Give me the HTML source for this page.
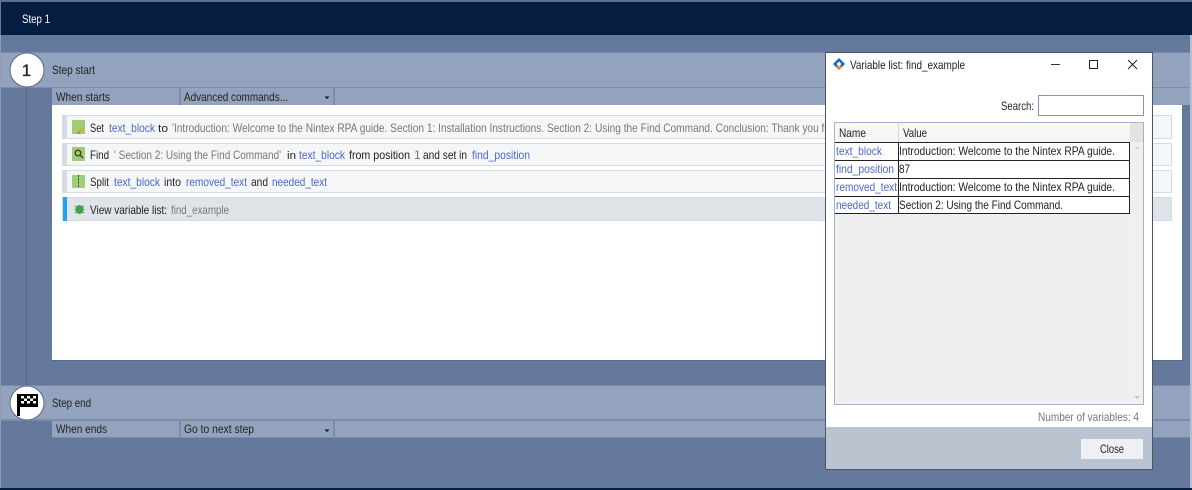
<!DOCTYPE html>
<html>
<head>
<meta charset="utf-8">
<style>
html,body{margin:0;padding:0;background:#64789c;width:1192px;height:490px;overflow:hidden}
svg{display:block}
text{font-family:"Liberation Sans",sans-serif;font-size:12px;fill:#222}
.w{fill:#fff}
.g{fill:#777}
.b{fill:#4c66cc}
</style>
</head>
<body>
<svg width="1192" height="490" viewBox="0 0 1192 490" xmlns="http://www.w3.org/2000/svg">
<defs>
<clipPath id="rowclip"><rect x="62" y="110" width="764" height="40"/></clipPath>
</defs>
<rect width="1192" height="490" fill="#64789c"/>
<rect x="0" y="0" width="1192" height="2" fill="#5d7091"/>
<rect x="1" y="2" width="1191" height="33" fill="#041d40"/>
<text class="w" x="22" y="23" textLength="28" lengthAdjust="spacingAndGlyphs">Step 1</text>

<!-- step start -->
<rect x="0" y="52" width="1192" height="36" fill="#93a2bd"/>
<rect x="0" y="52" width="1192" height="1" fill="#7a8bab"/>
<rect x="0" y="87" width="1192" height="1" fill="#7a8bab"/>
<rect x="26" y="87" width="1" height="299" fill="#55678a"/>
<circle cx="27" cy="70" r="17" fill="#fff" stroke="#55678a" stroke-width="1"/>
<text x="26.500" y="76" text-anchor="middle" style="font-size:17px;stroke:#111;stroke-width:0.300">1</text>
<text x="52" y="74" textLength="43" lengthAdjust="spacingAndGlyphs">Step start</text>
<rect x="52" y="88" width="1138" height="17" fill="#93a2bd"/>
<rect x="179" y="88" width="2" height="17" fill="#7a8bab"/>
<rect x="333" y="88" width="2" height="17" fill="#7a8bab"/>
<text x="56" y="101" textLength="54" lengthAdjust="spacingAndGlyphs">When starts</text>
<text x="184" y="101" textLength="104" lengthAdjust="spacingAndGlyphs">Advanced commands...</text>
<path d="M324.500 96.500h5l-2.500 2.500z" fill="#111"/>

<!-- panel -->
<rect x="52" y="105" width="1130" height="255" fill="#fff"/>
<rect x="52" y="360" width="1130" height="1" fill="#55678a"/>

<!-- rows -->
<rect x="62.500" y="115.500" width="1109" height="23" fill="#f5f6f8" stroke="#d5dae3"/>
<rect x="62" y="115" width="5" height="24" fill="#d5dae3"/>
<rect x="62.500" y="143.500" width="1109" height="22" fill="#f5f6f8" stroke="#d5dae3"/>
<rect x="62" y="143" width="5" height="23" fill="#d5dae3"/>
<rect x="62.500" y="170.500" width="1109" height="22" fill="#f5f6f8" stroke="#d5dae3"/>
<rect x="62" y="170" width="5" height="23" fill="#d5dae3"/>
<rect x="62.500" y="197.500" width="1109" height="23" fill="#dfe3ea" stroke="#d5dae3"/>
<rect x="63" y="197" width="4" height="24" fill="#1ca5ee"/>

<!-- icon: set -->
<rect x="72" y="120" width="13" height="14" fill="#a3cc78"/>
<path d="M79 132l5-5" stroke="#e8a020" stroke-width="1.600"/>
<path d="M78 133.500l1.500-1.500" stroke="#e0407a" stroke-width="1.600"/>
<!-- icon: find -->
<rect x="72" y="147" width="13" height="14" fill="#a3cc78"/>
<circle cx="78" cy="153" r="2.800" fill="none" stroke="#33472a" stroke-width="1.300"/>
<path d="M80 155l3 3" stroke="#33472a" stroke-width="1.500"/>
<!-- icon: split -->
<rect x="72" y="175" width="13" height="13" fill="#a3cc78"/>
<path d="M78.500 175v13" stroke="#33472a" stroke-width="1" stroke-dasharray="2 1.300"/>
<!-- icon: bug -->
<ellipse cx="79.500" cy="209.500" rx="3.800" ry="4.500" fill="#45a04a"/>
<path d="M75 206l2 1.500M84 206l-2 1.500M74.500 209.500h2M84.500 209.500h-2M75 213l2-1.500M84 213l-2-1.500" stroke="#45a04a" stroke-width="1.200"/>

<!-- row 1 text -->
<text x="90" y="132" textLength="14" lengthAdjust="spacingAndGlyphs">Set</text>
<text class="b" x="109" y="132" textLength="46" lengthAdjust="spacingAndGlyphs">text_block</text>
<text x="158" y="132" textLength="10" lengthAdjust="spacingAndGlyphs" style="font-size:11px">to</text>
<g clip-path="url(#rowclip)"><text class="g" x="172" y="132" textLength="658" lengthAdjust="spacingAndGlyphs">'Introduction: Welcome to the Nintex RPA guide. Section 1: Installation Instructions. Section 2: Using the Find Command. Conclusion: Thank you fo</text></g>
<!-- row 2 text -->
<text x="90" y="159" textLength="19" lengthAdjust="spacingAndGlyphs">Find</text>
<text class="g" x="114" y="159" textLength="167" lengthAdjust="spacingAndGlyphs">' Section 2: Using the Find Command'</text>
<text x="287" y="159" textLength="9" lengthAdjust="spacingAndGlyphs" style="font-size:11px">in</text>
<text class="b" x="299" y="159" textLength="46" lengthAdjust="spacingAndGlyphs">text_block</text>
<text x="349" y="159" textLength="61" lengthAdjust="spacingAndGlyphs">from position</text>
<text class="g" x="414" y="159">1</text>
<text x="423" y="159" textLength="44" lengthAdjust="spacingAndGlyphs">and set in</text>
<text class="b" x="472" y="159" textLength="58" lengthAdjust="spacingAndGlyphs">find_position</text>
<!-- row 3 text -->
<text x="90" y="186" textLength="19" lengthAdjust="spacingAndGlyphs">Split</text>
<text class="b" x="114" y="186" textLength="46" lengthAdjust="spacingAndGlyphs">text_block</text>
<text x="164" y="186" textLength="17" lengthAdjust="spacingAndGlyphs">into</text>
<text class="b" x="186" y="186" textLength="61" lengthAdjust="spacingAndGlyphs">removed_text</text>
<text x="251" y="186" textLength="17" lengthAdjust="spacingAndGlyphs">and</text>
<text class="b" x="272" y="186" textLength="55" lengthAdjust="spacingAndGlyphs">needed_text</text>
<!-- row 4 text -->
<text x="90" y="214" textLength="77" lengthAdjust="spacingAndGlyphs">View variable list:</text>
<text class="g" x="171" y="214" textLength="58" lengthAdjust="spacingAndGlyphs">find_example</text>

<!-- step end -->
<rect x="0" y="386" width="1192" height="34" fill="#93a2bd"/>
<rect x="0" y="385" width="1192" height="1" fill="#7a8bab"/>
<rect x="0" y="419" width="1192" height="2" fill="#7a8bab"/>
<circle cx="27" cy="403" r="17" fill="#fff" stroke="#55678a" stroke-width="1"/>
<path d="M17 394h21v13H20v9h-3z" fill="#000"/>
<path d="M21 396h3v2.500h-3zM27 396h3v2.500h-3zM33 396h3v2.500h-3zM24 398.500h3v2.500h-3zM30 398.500h3v2.500h-3zM21 401h3v2.500h-3zM27 401h3v2.500h-3zM33 401h3v2.500h-3z" fill="#fff"/>
<text x="52" y="407" textLength="39" lengthAdjust="spacingAndGlyphs">Step end</text>
<rect x="52" y="421" width="1138" height="16.500" fill="#93a2bd"/>
<rect x="179" y="421" width="2" height="17" fill="#7a8bab"/>
<rect x="333" y="421" width="2" height="17" fill="#7a8bab"/>
<text x="56" y="433" textLength="51" lengthAdjust="spacingAndGlyphs">When ends</text>
<text x="184" y="433" textLength="70" lengthAdjust="spacingAndGlyphs">Go to next step</text>
<path d="M324.500 429.500h5l-2.500 2.500z" fill="#111"/>
<rect x="0" y="488" width="1192" height="2" fill="#041d40"/>
<rect x="1190" y="35" width="2" height="453" fill="#b4bfd2"/>
<rect x="0" y="35" width="1" height="453" fill="#8e9db9"/>

<!-- dialog -->
<rect x="825" y="52" width="328" height="418" fill="#4a5568"/>
<rect x="826" y="53" width="326" height="416" fill="#fff"/>
<rect x="826" y="427" width="326" height="42" fill="#bcc3d0"/>
<path d="M839 58l6 6-6 6-6-6z" fill="#1565c8"/>
<path d="M836 67l3 3 3-3-3-3z" fill="#f08a1c"/>
<path d="M839 61.500l2.500 2.500-2.500 2.500-2.500-2.500z" fill="#fff"/>
<text x="850" y="69" textLength="115" lengthAdjust="spacingAndGlyphs">Variable list: find_example</text>
<rect x="1051" y="64" width="9" height="1" fill="#333"/>
<rect x="1089.500" y="60.500" width="8" height="8" fill="none" stroke="#222"/>
<path d="M1128 60l9 9M1137 60l-9 9" stroke="#222" stroke-width="1" fill="none"/>

<text x="1001" y="110" textLength="33" lengthAdjust="spacingAndGlyphs">Search:</text>
<rect x="1038.500" y="95.500" width="105" height="20" fill="#fff" stroke="#7f97ba"/>

<!-- table -->
<rect x="834.500" y="122.500" width="309" height="282" fill="#efefef" stroke="#9fb4cc"/>
<rect x="835" y="123" width="295" height="19" fill="#f6f6f6"/>
<rect x="1130" y="123" width="13" height="281" fill="#f0f0f0"/>
<rect x="1130" y="123" width="13" height="19" fill="#e3e3e3"/>
<rect x="898" y="123" width="1" height="19" fill="#d8d8d8"/>
<text x="839" y="137" textLength="27" lengthAdjust="spacingAndGlyphs">Name</text>
<text x="903" y="137" textLength="24" lengthAdjust="spacingAndGlyphs">Value</text>
<rect x="835" y="142" width="295" height="72" fill="#fff"/>
<g fill="#222">
<rect x="835" y="142" width="295" height="1"/>
<rect x="835" y="160" width="295" height="1"/>
<rect x="835" y="178" width="295" height="1"/>
<rect x="835" y="196" width="295" height="1"/>
<rect x="835" y="213" width="295" height="1"/>
<rect x="898" y="142" width="1" height="72"/>
<rect x="1129" y="142" width="1" height="72"/>
</g>
<path d="M1134 149h6l-3-3z" fill="#d8d8d8"/>
<path d="M1134 396h6l-3 3z" fill="#c8c8c8"/>
<text class="b" x="836" y="155" textLength="46" lengthAdjust="spacingAndGlyphs">text_block</text>
<text class="b" x="836" y="173" textLength="58" lengthAdjust="spacingAndGlyphs">find_position</text>
<text class="b" x="836" y="191" textLength="61" lengthAdjust="spacingAndGlyphs">removed_text</text>
<text class="b" x="836" y="209" textLength="55" lengthAdjust="spacingAndGlyphs">needed_text</text>
<text x="899" y="155" textLength="216" lengthAdjust="spacingAndGlyphs">Introduction: Welcome to the Nintex RPA guide.</text>
<text x="899" y="173" textLength="11" lengthAdjust="spacingAndGlyphs">87</text>
<text x="899" y="191" textLength="216" lengthAdjust="spacingAndGlyphs">Introduction: Welcome to the Nintex RPA guide.</text>
<text x="899" y="209" textLength="164" lengthAdjust="spacingAndGlyphs">Section 2: Using the Find Command.</text>

<text class="g" x="1038" y="421" textLength="101" lengthAdjust="spacingAndGlyphs">Number of variables: 4</text>
<rect x="1081" y="439" width="62" height="20" fill="#eef0f4"/>
<text x="1100" y="453" textLength="24" lengthAdjust="spacingAndGlyphs">Close</text>
</svg>
</body>
</html>
